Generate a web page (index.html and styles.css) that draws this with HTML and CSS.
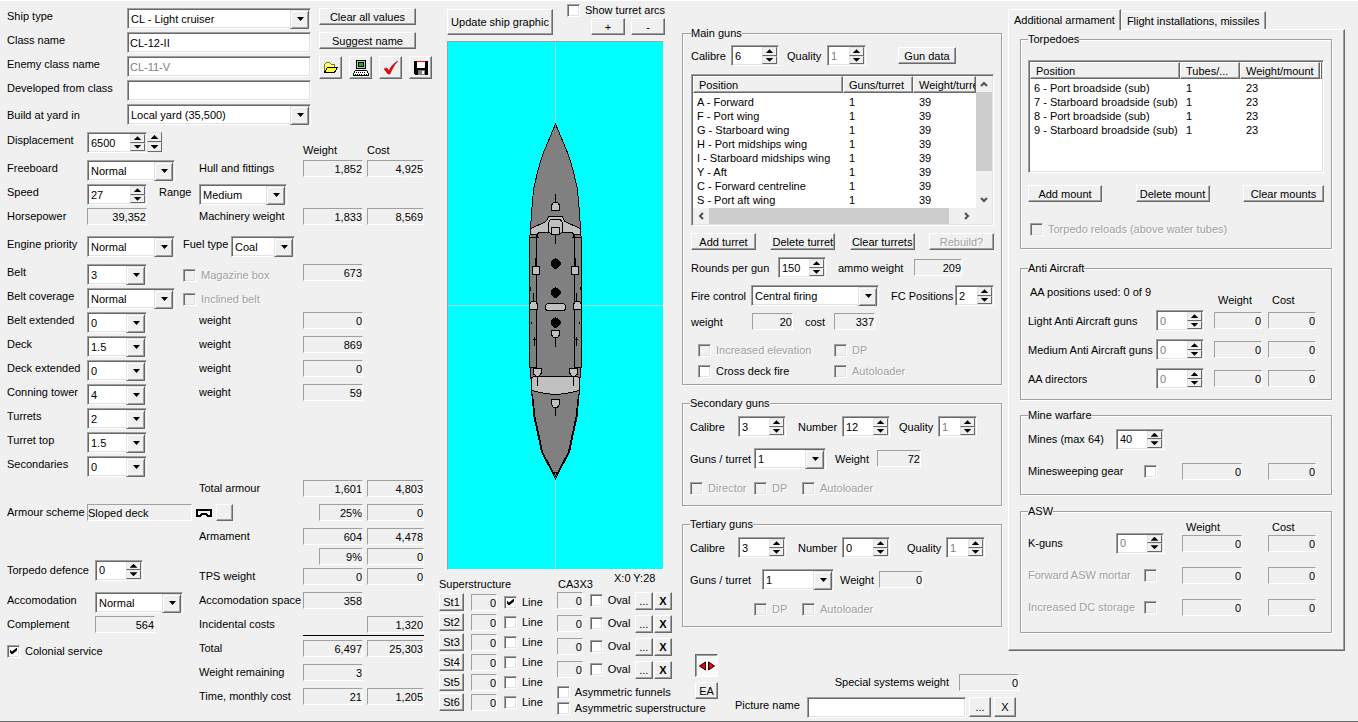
FILE: index.html
```html
<!DOCTYPE html>
<html lang="en">
<head>
    <meta charset="UTF-8">
    <meta name="viewport" content="width=device-width, initial-scale=1.0">
    <title>Ship design</title>
    <link rel="stylesheet" href="styles.css">
</head>
<body>
<form class="designer">

    <!-- hull, machinery, armour -->
    <div class="hull">
        <div class="ident">
            <div>
                <div class="row"><label class="lbl-name" for="shiptype">Ship type</label><span class="combo name"><select id="shiptype"><option>CL - Light cruiser</option></select></span></div>
                <div class="row"><label class="lbl-name" for="classname">Class name</label><input class="text name" id="classname" type="text" value="CL-12-II"></div>
                <div class="row"><label class="lbl-name" for="enemyname">Enemy class name</label><input class="text name" id="enemyname" type="text" value="CL-11-V" disabled></div>
                <div class="row"><label class="lbl-name" for="devfrom">Developed from class</label><input class="text name" id="devfrom" type="text" value=""></div>
                <div class="row"><label class="lbl-name low" for="yard">Build at yard in</label><span class="combo name"><select id="yard"><option>Local yard (35,500)</option></select></span></div>
            </div>
            <div class="actions">
                <button type="button" class="btn">Clear all values</button>
                <button type="button" class="btn">Suggest name</button>
                <div class="icons">
                    <button type="button" class="btn icon" aria-label="Open">
                        <svg width="16" height="16" viewBox="0 0 16 16" shape-rendering="crispEdges"><path d="M1.5 12.500V4.500L3.500 2.500H6.500L8.500 4.500H11.500V7.500" fill="#ffff80" stroke="#808000"/><path d="M1.500 12.500L4.500 7.500H14.500L11.500 12.500Z" fill="#ffff40" stroke="#000"/></svg>
                    </button>
                    <button type="button" class="btn icon" aria-label="Print">
                        <svg width="16" height="18" viewBox="0 0 16 18" shape-rendering="crispEdges"><rect x="3.500" y="1.500" width="9" height="8" fill="#c0c0c0" stroke="#000"/><rect x="5.500" y="3.500" width="5" height="4" fill="#00c000" stroke="#000"/><path d="M2.500 11.500H13.500L15.500 14.500V16.500H.500V14.500Z" fill="#fff" stroke="#000"/><path d="M3 13.500H13M2 15.500H9M11 15.500H14" stroke="#000" stroke-dasharray="1 1"/></svg>
                    </button>
                    <button type="button" class="btn icon" aria-label="Accept">
                        <svg width="16" height="16" viewBox="0 0 16 16"><path d="M1 9L4 8L6 11C8 6 11 3 15 1C11 5 9 9 7 14H5Z" fill="#f00" stroke="#800000" stroke-width=".5"/></svg>
                    </button>
                    <button type="button" class="btn icon" aria-label="Save">
                        <svg width="16" height="16" viewBox="0 0 16 16" shape-rendering="crispEdges"><path d="M1 1H15V15H2L1 14Z"/><path d="M4 2H12V8H4Z" fill="#fff"/><path d="M4 1H12V2H4Z" fill="#f00"/><path d="M5 10H12V15H5Z" fill="#808080"/><path d="M9 11H11V14H9Z" fill="#fff"/></svg>
                    </button>
                </div>
            </div>
        </div>

        <div class="row">
            <label class="lbl" for="disp">Displacement</label>
            <div class="wide">
                <span class="spin w59"><input id="disp" type="text" value="6500"><span class="arrows"><button type="button" aria-label="Up"></button><button type="button" aria-label="Down"></button></span></span>
                <span class="arrows loose"><button type="button" aria-label="Up 100"></button><button type="button" aria-label="Down 100"></button></span>
            </div>
            <div class="sums heads"><span>Weight</span><span>Cost</span></div>
        </div>

        <div class="group">
            <div class="row">
                <label class="lbl" for="freeboard">Freeboard</label>
                <div class="cell"><span class="combo w87"><select id="freeboard"><option>Normal</option></select></span></div>
                <span class="mid">Hull and fittings</span>
                <div class="sums"><output>1,852</output><output>4,925</output></div>
            </div>
            <div class="row">
                <label class="lbl" for="speed">Speed</label>
                <div class="wide">
                    <span class="cell72"><span class="spin w59"><input id="speed" type="text" value="27"><span class="arrows"><button type="button" aria-label="Up"></button><button type="button" aria-label="Down"></button></span></span></span>
                    <label class="lbl-range" for="range">Range</label>
                    <span class="combo w87"><select id="range"><option>Medium</option></select></span>
                </div>
            </div>
            <div class="row">
                <span class="lbl">Horsepower</span>
                <div class="cell"><output class="w59">39,352</output></div>
                <span class="mid">Machinery weight</span>
                <div class="sums"><output>1,833</output><output>8,569</output></div>
            </div>
        </div>

        <div class="row">
            <label class="lbl" for="engine">Engine priority</label>
            <div class="wide">
                <span class="half"><span class="combo w87"><select id="engine"><option>Normal</option></select></span></span>
                <label class="lbl-fuel" for="fuel">Fuel type</label>
                <span class="combo w64"><select id="fuel"><option>Coal</option></select></span>
            </div>
        </div>

        <div class="group">
            <div class="row">
                <label class="lbl" for="belt">Belt</label>
                <div class="wide">
                    <span class="half"><span class="combo w59"><select id="belt"><option>3</option></select></span></span>
                    <label class="check off"><input type="checkbox" disabled>Magazine box</label>
                </div>
                <div class="sums"><output>673</output></div>
            </div>
            <div class="row">
                <label class="lbl" for="coverage">Belt coverage</label>
                <div class="wide">
                    <span class="half"><span class="combo w87"><select id="coverage"><option>Normal</option></select></span></span>
                    <label class="check off"><input type="checkbox" disabled>Inclined belt</label>
                </div>
            </div>
            <div class="row">
                <label class="lbl" for="beltext">Belt extended</label>
                <div class="cell"><span class="combo w59"><select id="beltext"><option>0</option></select></span></div>
                <span class="mid">weight</span>
                <div class="sums"><output>0</output></div>
            </div>
            <div class="row">
                <label class="lbl" for="deck">Deck</label>
                <div class="cell"><span class="combo w59"><select id="deck"><option>1.5</option></select></span></div>
                <span class="mid">weight</span>
                <div class="sums"><output>869</output></div>
            </div>
            <div class="row">
                <label class="lbl" for="deckext">Deck extended</label>
                <div class="cell"><span class="combo w59"><select id="deckext"><option>0</option></select></span></div>
                <span class="mid">weight</span>
                <div class="sums"><output>0</output></div>
            </div>
            <div class="row">
                <label class="lbl" for="conning">Conning tower</label>
                <div class="cell"><span class="combo w59"><select id="conning"><option>4</option></select></span></div>
                <span class="mid">weight</span>
                <div class="sums"><output>59</output></div>
            </div>
            <div class="row">
                <label class="lbl" for="turrets">Turrets</label>
                <span class="combo w59"><select id="turrets"><option>2</option></select></span>
            </div>
            <div class="row">
                <label class="lbl" for="turrettop">Turret top</label>
                <span class="combo w59"><select id="turrettop"><option>1.5</option></select></span>
            </div>
            <div class="row">
                <label class="lbl" for="secondaries">Secondaries</label>
                <span class="combo w59"><select id="secondaries"><option>0</option></select></span>
            </div>
            <div class="row">
                <span class="lbl"></span>
                <div class="cell"></div>
                <span class="mid">Total armour</span>
                <div class="sums"><output>1,601</output><output>4,803</output></div>
            </div>
            <div class="row">
                <span class="lbl">Armour scheme</span>
                <div class="wide scheme">
                    <output class="left">Sloped deck</output>
                    <svg width="16" height="8" viewBox="0 0 16 8" shape-rendering="crispEdges"><path d="M1 1H15V7H12L10 5H6L4 7H1Z" fill="#f0f0f0" stroke="#000" stroke-width="2"/></svg>
                    <button type="button" class="btn small" aria-label="Change armour scheme"></button>
                </div>
                <div class="sums"><output class="pct">25%</output><output>0</output></div>
            </div>
            <div class="row short">
                <span class="lbl"></span>
                <div class="cell"></div>
                <span class="mid">Armament</span>
                <div class="sums"><output>604</output><output>4,478</output></div>
            </div>
            <div class="row pair">
                <label class="lbl88" for="tds">Torpedo defence</label>
                <div class="cell104"><span class="spin"><input id="tds" type="text" value="0"><span class="arrows"><button type="button" aria-label="Up"></button><button type="button" aria-label="Down"></button></span></span></div>
                <span class="mid end">TPS weight</span>
                <div class="sums"><output class="pct">9%</output><output>0</output><output>0</output><output>0</output></div>
            </div>
            <div class="row">
                <label class="lbl88" for="accom">Accomodation</label>
                <div class="cell104"><span class="combo w87"><select id="accom"><option>Normal</option></select></span></div>
                <span class="mid">Accomodation space</span>
                <div class="sums"><output>358</output></div>
            </div>
            <div class="row">
                <span class="lbl88">Complement</span>
                <div class="cell104"><output class="w59">564</output></div>
                <span class="mid">Incidental costs</span>
                <div class="sums ruled"><output class="cost">1,320</output></div>
            </div>
            <div class="row">
                <div class="lbl192"><label class="check"><input type="checkbox" checked>Colonial service</label></div>
                <span class="mid">Total</span>
                <div class="sums"><output>6,497</output><output>25,303</output></div>
            </div>
            <div class="row">
                <div class="lbl192"></div>
                <span class="mid">Weight remaining</span>
                <div class="sums"><output>3</output></div>
            </div>
            <div class="row">
                <div class="lbl192"></div>
                <span class="mid">Time, monthly cost</span>
                <div class="sums"><output>21</output><output>1,205</output></div>
            </div>
        </div>
    </div>

    <!-- ship graphic and superstructure -->
    <div class="graphic">
        <div class="graphic-bar">
            <button type="button" class="btn update">Update ship graphic</button>
            <div class="zoom">
                <label class="check"><input type="checkbox">Show turret arcs</label>
                <div class="zoom-btns">
                    <button type="button" class="btn">+</button>
                    <button type="button" class="btn">-</button>
                </div>
            </div>
        </div>
        <div class="sea">
            <svg viewBox="448 42 215 527" shape-rendering="crispEdges" fill="none" stroke="#000">
                <path d="M555.500 42V569M448 305.500H663" stroke="#a0d8d8"/>
                <path fill="#808080" d="M555.500 124L542.500 155L538 170L534 187L532.500 200L530.500 228L529.500 243V367L530.500 368L531.500 390L534 417L537.500 433L541.500 452L552 472L555.500 479L559 472L569.500 452L573.500 433L577 417L579.500 390L580.500 368L581.500 367V243L580.500 228L578.500 200L577 187L573 170L568.500 155Z"/>
                <path d="M532.500 394L535 417L538.500 433L542.500 452L552 470L555.500 476L559 470L568.500 452L572.500 433L576 417L578.500 394M552 472.500H559"/>
                <!-- side decks -->
                <path d="M536.500 234V367.500H529.500M574.500 234V367.500H581.500M530 234.500H537M574 234.500H581M529 237.500H539M572 237.500H582M537.500 231V238M573.500 231V238"/>
                <!-- forward superstructure -->
                <path fill="#c0c0c0" d="M530.500 228.500L546.500 221.500L548.500 216.500H562.500L564.500 221.500L580.500 228.500V234H574L571 232H562.500L559.500 234.500H551.500L548.500 232H540L537 234H530.500Z"/>
                <path fill="#c0c0c0" d="M548.500 223L550.500 219.500H560.500L562.500 223V231.500L559.500 234.500H551.500L548.500 231.500Z"/>
                <path fill="#c0c0c0" d="M551.500 227.500H559.500V234.500H551.500Z"/>
                <path d="M555.500 235V244"/>
                <!-- aft superstructure -->
                <path fill="#c0c0c0" d="M531.500 378L533.500 376.500H577.500L579.500 378V390.500L571 392.500L558 394.500H553L540 392.500L531.500 390.500Z"/>
                <!-- turrets -->
                <path fill="#c0c0c0" d="M551.500 210.500V205L553.500 202.500H557.500L559.500 205V210.500Z"/>
                <path d="M555.500 194V202"/>
                <path fill="#c0c0c0" d="M532.500 266.500H539.500V274.500H532.500ZM571.500 266.500H578.500V274.500H571.500Z"/>
                <path d="M535.500 258V266M575.500 258V266M533.500 293V302M576.500 293V302"/>
                <path fill="#c0c0c0" d="M529.500 309.500V304L531.500 301.500H535.500L537.500 304V309.500ZM573.500 309.500V304L575.500 301.500H579.500L581.500 304V309.500Z"/>
                <rect fill="#c0c0c0" x="545.500" y="303.500" width="20" height="7" rx="3"/>
                <path fill="#c0c0c0" d="M551.500 330.500H559.500V335L557.500 337.500H553.500L551.500 335Z"/>
                <path fill="#c0c0c0" d="M533.500 368.500H541.500V373L538.500 376.500H536.500L533.500 374ZM569.500 368.500H577.500V374L574.500 376.500H572.500L569.500 373Z"/>
                <path fill="#c0c0c0" d="M551.500 399.500H559.500V404L557.500 407.500H553.500L551.500 404Z"/>
                <path d="M555.500 338V347M537.500 377V386M573.500 377V386M555.500 408V416M534.500 337V346M576.500 337V346M533 339.500H536M575 339.500H578M530 288V291M531.500 322V324M579.500 322V324M530.500 287V290M580.500 287V290"/>
                <!-- funnels -->
                <path fill="#000" d="M555.500 258.500L560 262V265L557 268H554L551 265V262ZM555.500 287.500L560 291V294L557 297H554L551 294V291ZM555.500 317.500L560 321V324L557 327H554L551 324V321Z"/>
            </svg>
        </div>
        <div class="captions">
            <span class="cap-left">Superstructure</span>
            <span class="cap-mid">CA3X3</span>
            <span class="coords">X:0 Y:28</span>
        </div>
        <div class="structures">
            <div class="st-list">
                <div class="st"><button type="button" class="btn">St1</button><output>0</output><label class="check"><input type="checkbox" checked>Line</label></div>
                <div class="st"><button type="button" class="btn">St2</button><output>0</output><label class="check"><input type="checkbox">Line</label></div>
                <div class="st"><button type="button" class="btn">St3</button><output>0</output><label class="check"><input type="checkbox">Line</label></div>
                <div class="st"><button type="button" class="btn">St4</button><output>0</output><label class="check"><input type="checkbox">Line</label></div>
                <div class="st"><button type="button" class="btn">St5</button><output>0</output><label class="check"><input type="checkbox">Line</label></div>
                <div class="st"><button type="button" class="btn">St6</button><output>0</output><label class="check"><input type="checkbox">Line</label></div>
            </div>
            <div class="funnel-list">
                <div class="funnel"><output>0</output><label class="check"><input type="checkbox">Oval</label><button type="button" class="btn">...</button><button type="button" class="btn x">X</button></div>
                <div class="funnel"><output>0</output><label class="check"><input type="checkbox">Oval</label><button type="button" class="btn">...</button><button type="button" class="btn x">X</button></div>
                <div class="funnel"><output>0</output><label class="check"><input type="checkbox">Oval</label><button type="button" class="btn">...</button><button type="button" class="btn x">X</button></div>
                <div class="funnel"><output>0</output><label class="check"><input type="checkbox">Oval</label><button type="button" class="btn">...</button><button type="button" class="btn x">X</button></div>
                <label class="check"><input type="checkbox">Asymmetric funnels</label>
                <label class="check"><input type="checkbox">Asymmetric superstructure</label>
            </div>
        </div>
    </div>

    <!-- weapons -->
    <div class="weapons">
        <div class="weapons-cols">
            <div class="guns">
                <fieldset class="main-guns">
                    <legend>Main guns</legend>
                    <div class="line main-calibre">
                        <label for="mcal">Calibre</label>
                        <span class="spin"><input id="mcal" type="text" value="6"><span class="arrows"><button type="button" aria-label="Up"></button><button type="button" aria-label="Down"></button></span></span>
                        <label for="mqual">Quality</label>
                        <span class="spin w39"><input id="mqual" type="text" value="1" disabled><span class="arrows"><button type="button" aria-label="Up"></button><button type="button" aria-label="Down"></button></span></span>
                        <button type="button" class="btn">Gun data</button>
                    </div>
                    <div class="list turret-list">
                        <table>
                            <thead><tr><th class="c-pos">Position</th><th class="c-guns">Guns/turret</th><th>Weight/turret</th></tr></thead>
                            <tbody>
                                <tr><td>A - Forward</td><td>1</td><td>39</td></tr>
                                <tr><td>F - Port wing</td><td>1</td><td>39</td></tr>
                                <tr><td>G - Starboard wing</td><td>1</td><td>39</td></tr>
                                <tr><td>H - Port midships wing</td><td>1</td><td>39</td></tr>
                                <tr><td>I - Starboard midships wing</td><td>1</td><td>39</td></tr>
                                <tr><td>Y - Aft</td><td>1</td><td>39</td></tr>
                                <tr><td>C - Forward centreline</td><td>1</td><td>39</td></tr>
                                <tr><td>S - Port aft wing</td><td>1</td><td>39</td></tr>
                            </tbody>
                        </table>
                        <div class="vscroll">
                            <svg width="16" height="16" viewBox="0 0 16 16"><path d="M5 10L8 7L11 10"/></svg>
                            <span class="thumb"></span>
                            <svg width="16" height="16" viewBox="0 0 16 16"><path d="M5 6L8 9L11 6"/></svg>
                        </div>
                        <div class="hscroll">
                            <svg width="16" height="16" viewBox="0 0 16 16"><path d="M10 5L7 8L10 11"/></svg>
                            <span class="thumb"></span>
                            <svg width="16" height="16" viewBox="0 0 16 16"><path d="M6 5L9 8L6 11"/></svg>
                        </div>
                    </div>
                    <div class="turret-btns">
                        <button type="button" class="btn">Add turret</button>
                        <button type="button" class="btn">Delete turret</button>
                        <button type="button" class="btn">Clear turrets</button>
                        <button type="button" class="btn" disabled>Rebuild?</button>
                    </div>
                    <div class="line rounds">
                        <label for="rounds">Rounds per gun</label>
                        <span class="spin"><input id="rounds" type="text" value="150"><span class="arrows"><button type="button" aria-label="Up"></button><button type="button" aria-label="Down"></button></span></span>
                        <span>ammo weight</span>
                        <output class="w48">209</output>
                    </div>
                    <div class="line fire">
                        <label for="fire">Fire control</label>
                        <span class="combo w128"><select id="fire"><option>Central firing</option></select></span>
                        <label for="fcpos">FC Positions</label>
                        <span class="spin w39"><input id="fcpos" type="text" value="2"><span class="arrows"><button type="button" aria-label="Up"></button><button type="button" aria-label="Down"></button></span></span>
                    </div>
                    <div class="line fire-cost">
                        <span>weight</span>
                        <output class="w41">20</output>
                        <span>cost</span>
                        <output class="w41">337</output>
                    </div>
                    <div class="main-checks">
                        <label class="check off"><input type="checkbox" disabled>Increased elevation</label>
                        <label class="check off"><input type="checkbox" disabled>DP</label>
                        <label class="check"><input type="checkbox">Cross deck fire</label>
                        <label class="check off"><input type="checkbox" disabled>Autoloader</label>
                    </div>
                </fieldset>

                <fieldset class="light-guns">
                    <legend>Secondary guns</legend>
                    <div class="line sec-calibre">
                        <label for="scal">Calibre</label>
                        <span class="spin"><input id="scal" type="text" value="3"><span class="arrows"><button type="button" aria-label="Up"></button><button type="button" aria-label="Down"></button></span></span>
                        <label for="snum">Number</label>
                        <span class="spin"><input id="snum" type="text" value="12"><span class="arrows"><button type="button" aria-label="Up"></button><button type="button" aria-label="Down"></button></span></span>
                        <label for="squal">Quality</label>
                        <span class="spin w39"><input id="squal" type="text" value="1" disabled><span class="arrows"><button type="button" aria-label="Up"></button><button type="button" aria-label="Down"></button></span></span>
                    </div>
                    <div class="line sec-turret">
                        <label for="sgpt">Guns / turret</label>
                        <span class="combo w72"><select id="sgpt"><option>1</option></select></span>
                        <span>Weight</span>
                        <output class="w44">72</output>
                    </div>
                    <div class="light-checks">
                        <label class="check off"><input type="checkbox" disabled>Director</label>
                        <label class="check off dp"><input type="checkbox" disabled>DP</label>
                        <label class="check off"><input type="checkbox" disabled>Autoloader</label>
                    </div>
                </fieldset>

                <fieldset class="light-guns">
                    <legend>Tertiary guns</legend>
                    <div class="line ter-calibre">
                        <label for="tcal">Calibre</label>
                        <span class="spin"><input id="tcal" type="text" value="3"><span class="arrows"><button type="button" aria-label="Up"></button><button type="button" aria-label="Down"></button></span></span>
                        <label for="tnum">Number</label>
                        <span class="spin"><input id="tnum" type="text" value="0"><span class="arrows"><button type="button" aria-label="Up"></button><button type="button" aria-label="Down"></button></span></span>
                        <label for="tqual">Quality</label>
                        <span class="spin w39"><input id="tqual" type="text" value="1" disabled><span class="arrows"><button type="button" aria-label="Up"></button><button type="button" aria-label="Down"></button></span></span>
                    </div>
                    <div class="line ter-turret">
                        <label for="tgpt">Guns / turret</label>
                        <span class="combo w72"><select id="tgpt"><option>1</option></select></span>
                        <span>Weight</span>
                        <output class="w44">0</output>
                    </div>
                    <div class="light-checks">
                        <label class="check off dp"><input type="checkbox" disabled>DP</label>
                        <label class="check off"><input type="checkbox" disabled>Autoloader</label>
                    </div>
                </fieldset>
            </div>

            <div class="extra">
                <div class="tabs" role="tablist">
                    <button type="button" role="tab" class="tab active" aria-selected="true">Additional armament</button>
                    <button type="button" role="tab" class="tab">Flight installations, missiles</button>
                </div>
                <div class="panel">
                    <fieldset class="torpedoes">
                        <legend>Torpedoes</legend>
                        <div class="list mount-list">
                            <table>
                                <thead><tr><th class="c-pos">Position</th><th class="c-tubes">Tubes/...</th><th class="c-mount">Weight/mount</th><th></th></tr></thead>
                                <tbody>
                                    <tr><td>6 - Port broadside (sub)</td><td>1</td><td>23</td><td></td></tr>
                                    <tr><td>7 - Starboard broadside (sub)</td><td>1</td><td>23</td><td></td></tr>
                                    <tr><td>8 - Port broadside (sub)</td><td>1</td><td>23</td><td></td></tr>
                                    <tr><td>9 - Starboard broadside (sub)</td><td>1</td><td>23</td><td></td></tr>
                                </tbody>
                            </table>
                        </div>
                        <div class="mount-btns">
                            <button type="button" class="btn">Add mount</button>
                            <button type="button" class="btn">Delete mount</button>
                            <button type="button" class="btn">Clear mounts</button>
                        </div>
                        <label class="check off"><input type="checkbox" disabled>Torpedo reloads (above water tubes)</label>
                    </fieldset>

                    <fieldset class="aa">
                        <legend>Anti Aircraft</legend>
                        <div class="aa-head"><span class="used">AA positions used: 0 of 9</span><span class="head">Weight</span><span class="head">Cost</span></div>
                        <div class="aa-row">
                            <label for="laa">Light Anti Aircraft guns</label>
                            <span class="spin"><input id="laa" type="text" value="0" disabled><span class="arrows"><button type="button" aria-label="Up"></button><button type="button" aria-label="Down"></button></span></span>
                            <output class="w48">0</output><output class="w48">0</output>
                        </div>
                        <div class="aa-row">
                            <label for="maa">Medium Anti Aircraft guns</label>
                            <span class="spin"><input id="maa" type="text" value="0" disabled><span class="arrows"><button type="button" aria-label="Up"></button><button type="button" aria-label="Down"></button></span></span>
                            <output class="w48">0</output><output class="w48">0</output>
                        </div>
                        <div class="aa-row">
                            <label for="aadir">AA directors</label>
                            <span class="spin"><input id="aadir" type="text" value="0" disabled><span class="arrows"><button type="button" aria-label="Up"></button><button type="button" aria-label="Down"></button></span></span>
                            <output class="w48">0</output><output class="w48">0</output>
                        </div>
                    </fieldset>

                    <fieldset class="mines">
                        <legend>Mine warfare</legend>
                        <div class="asw-row">
                            <label for="mines">Mines (max 64)</label>
                            <span class="spin"><input id="mines" type="text" value="40"><span class="arrows"><button type="button" aria-label="Up"></button><button type="button" aria-label="Down"></button></span></span>
                        </div>
                        <div class="asw-row">
                            <label for="sweep">Minesweeping gear</label>
                            <input id="sweep" type="checkbox">
                            <output class="w59">0</output><output class="w48">0</output>
                        </div>
                    </fieldset>

                    <fieldset class="asw">
                        <legend>ASW</legend>
                        <div class="asw-row asw-heads"><span></span><span></span><span class="head">Weight</span><span class="head">Cost</span></div>
                        <div class="asw-row">
                            <label for="kguns">K-guns</label>
                            <span class="spin"><input id="kguns" type="text" value="0" disabled><span class="arrows"><button type="button" aria-label="Up"></button><button type="button" aria-label="Down"></button></span></span>
                            <output class="w59">0</output><output class="w48">0</output>
                        </div>
                        <div class="asw-row">
                            <label class="off" for="mortar">Forward ASW mortar</label>
                            <input id="mortar" type="checkbox" disabled>
                            <output class="w59">0</output><output class="w48">0</output>
                        </div>
                        <div class="asw-row">
                            <label class="off" for="dcs">Increased DC storage</label>
                            <input id="dcs" type="checkbox" disabled>
                            <output class="w59">0</output><output class="w48">0</output>
                        </div>
                    </fieldset>
                </div>
            </div>
        </div>

        <div class="footer">
            <div class="tools">
                <button type="button" class="btn toggle" aria-label="Flip view" aria-pressed="true">
                    <svg width="16" height="10" viewBox="0 0 16 10"><path d="M.5 5L6.500 1V9ZM15.500 5L9.500 1V9Z" fill="#f00" stroke="#000"/></svg>
                </button>
                <button type="button" class="btn">EA</button>
            </div>
            <div class="picture">
                <div class="special"><span>Special systems weight</span><output>0</output></div>
                <div class="picture-row">
                    <label for="picture">Picture name</label>
                    <input class="text" id="picture" type="text" value="">
                    <button type="button" class="btn">...</button>
                    <button type="button" class="btn">X</button>
                </div>
            </div>
        </div>
    </div>
</form>
</body>
</html>
```
FILE: styles.css
```css
* {
    box-sizing: border-box;
}
body {
    margin: 0;
    background: #f0f0f0;
    color: #000;
}
body, button, input, select {
    font-family: "Liberation Sans", Arial, sans-serif;
    font-size: 11px;
    line-height: 16px;
}
.designer {
    display: grid;
    grid-template-columns: 432px 243px 1fr;
    min-height: 100vh;
    padding-left: 7px;
    box-shadow: inset 0 1px 0 #fff;
    border-bottom: 1px solid #696969;
    white-space: nowrap;
}

/* controls */
.btn {
    height: 17px;
    padding: 0;
    background: #f0f0f0;
    color: #000;
    border: 1px solid;
    border-color: #fff #696969 #696969 #fff;
    box-shadow: inset -1px -1px 0 #a0a0a0;
    line-height: 14px;
    display: flex;
    align-items: center;
    justify-content: center;
}
.btn:disabled,
.off {
    color: #a0a0a0;
    text-shadow: 1px 1px 0 #fff;
}
.text, .combo, .spin {
    height: 21px;
    background: #fff;
    border: 1px solid;
    border-color: #a0a0a0 #fff #fff #a0a0a0;
    box-shadow: inset 1px 1px 0 #696969, inset -1px -1px 0 #e3e3e3;
    border-radius: 0;
}
.text {
    padding: 0 2px;
    color: #000;
}
input:disabled {
    color: #808080;
}
.combo {
    display: block;
    position: relative;
    padding: 1px;
}
.combo select {
    display: block;
    width: 100%;
    height: 17px;
    padding: 0 0 0 2px;
    border: 0;
    background: transparent;
    color: #000;
    appearance: none;
}
.combo::before {
    content: "";
    position: absolute;
    top: 1px;
    right: 1px;
    width: 17px;
    height: 17px;
    background: #f0f0f0;
    border: 1px solid;
    border-color: #e3e3e3 #696969 #696969 #e3e3e3;
    box-shadow: inset 1px 1px 0 #fff, inset -1px -1px 0 #a0a0a0;
    pointer-events: none;
}
.combo::after {
    content: "";
    position: absolute;
    top: 8px;
    right: 6px;
    width: 7px;
    height: 4px;
    background: #000;
    clip-path: polygon(0 0, 100% 0, 50% 100%);
    pointer-events: none;
}
.spin {
    display: flex;
    width: 48px;
    padding: 1px;
}
.spin input {
    flex: 1;
    min-width: 0;
    padding: 0 0 0 2px;
    border: 0;
    background: transparent;
    color: #000;
}
.spin input:disabled {
    color: #808080;
}
.arrows {
    display: flex;
    flex-direction: column;
    width: 15px;
    flex: none;
}
.arrows button {
    flex: 1;
    min-height: 0;
    padding: 0;
    background: #f0f0f0;
    border: 1px solid;
    border-color: #e3e3e3 #696969 #696969 #e3e3e3;
    display: flex;
    align-items: center;
    justify-content: center;
}
.arrows button::before {
    content: "";
    width: 8px;
    height: 4px;
    background: #000;
    clip-path: polygon(50% 0, 100% 100%, 0 100%);
}
.arrows button:last-child::before {
    clip-path: polygon(0 0, 100% 0, 50% 100%);
}
.arrows.loose {
    height: 20px;
}
output {
    display: block;
    height: 17px;
    line-height: 16px;
    text-align: right;
    border: 1px solid;
    border-color: #a0a0a0 #fff #fff #a0a0a0;
}
input[type="checkbox"] {
    appearance: none;
    flex: none;
    width: 13px;
    height: 13px;
    margin: 0;
    background: #fff;
    border: 1px solid;
    border-color: #a0a0a0 #fff #fff #a0a0a0;
    box-shadow: inset 1px 1px 0 #696969, inset -1px -1px 0 #e3e3e3;
}
input[type="checkbox"]:disabled {
    background: #f0f0f0;
}
input[type="checkbox"]:checked::before {
    content: "";
    display: block;
    width: 7px;
    height: 7px;
    margin: 2px;
    background: #000;
    clip-path: polygon(0 28%, 28% 57%, 100% 0, 100% 43%, 28% 100%, 0 71%);
}
.check {
    display: flex;
    align-items: center;
    gap: 5px;
}
.w39 { width: 39px; }
.w41 { width: 41px; }
.w44 { width: 44px; }
.w48 { width: 48px; }
.w59 { width: 60px; }
.w64 { width: 64px; }
.w72 { width: 72px; }
.w87 { width: 88px; }
.w128 { width: 128px; }

/* hull column */
.hull {
    display: flex;
    flex-direction: column;
    gap: 4px;
    padding-top: 8px;
}
.ident {
    display: flex;
    gap: 8px;
}
.row {
    display: flex;
    align-items: flex-start;
    height: 24px;
}
.row.short {
    height: 20px;
}
.row.pair {
    height: 44px;
    align-items: center;
}
.lbl-name { width: 120px; }
.lbl-name.low { padding-top: 3px; }
.name { width: 184px; }
.lbl { width: 80px; }
.lbl88 { width: 88px; }
.lbl192 { width: 192px; }
.cell { width: 112px; }
.cell72 { width: 72px; }
.cell104 { width: 104px; }
.mid { width: 104px; }
.mid.end { align-self: flex-end; padding-bottom: 8px; }
.half { width: 96px; }
.lbl-range { width: 40px; }
.lbl-fuel { width: 48px; }
.wide {
    display: flex;
    width: 216px;
}
.row .check {
    height: 22px;
}
.sums {
    display: grid;
    grid-template-columns: 60px 57px;
    align-content: start;
    column-gap: 4px;
}
.pair .sums {
    align-self: stretch;
    row-gap: 3px;
}
.sums .pct {
    width: 44px;
    justify-self: end;
}
.sums .cost {
    grid-column: 2;
}
.ruled {
    height: 20px;
    border-bottom: 1px solid #000;
}
.heads {
    align-self: flex-end;
    line-height: 12px;
}
.actions {
    display: flex;
    flex-direction: column;
    align-items: flex-start;
    gap: 7px;
}
.actions > .btn {
    width: 97px;
}
.icons {
    display: flex;
    gap: 7px;
}
.icon {
    width: 23px;
    height: 23px;
}
.scheme {
    align-items: center;
    gap: 4px;
}
.scheme .left {
    width: 105px;
    text-align: left;
}
.small {
    width: 17px;
}

/* ship graphic */
.graphic {
    display: flex;
    flex-direction: column;
}
.graphic-bar {
    display: flex;
    justify-content: space-between;
    padding: 2px 17px 0 8px;
}
.update {
    width: 106px;
    height: 26px;
    margin-top: 7px;
}
.zoom {
    width: 98px;
}
.zoom-btns {
    display: flex;
    justify-content: flex-end;
    gap: 6px;
}
.zoom-btns .btn {
    width: 34px;
    height: 17px;
}
.sea {
    margin: 6px 18px 0 8px;
    background: #0ff;
    border: 1px solid;
    border-color: #a0a0a0 #fff #fff #a0a0a0;
}
.sea svg {
    display: block;
    width: 100%;
}
.captions {
    display: flex;
    height: 22px;
}
.captions span {
    align-self: flex-end;
}
.captions .coords {
    align-self: flex-start;
}
.cap-left { width: 119px; }
.cap-mid { width: 56px; }
.structures {
    display: flex;
    gap: 14px;
}
.st-list {
    width: 106px;
}
.st {
    display: flex;
    align-items: center;
    gap: 7px;
    height: 20px;
}
.st .btn {
    width: 25px;
    height: 18px;
}
.st output, .funnel output {
    width: 26px;
}
.funnel {
    display: flex;
    gap: 7px;
    height: 23px;
    align-items: flex-start;
}
.funnel .btn {
    width: 18px;
    height: 18px;
}
.funnel .btn.x {
    margin-left: -6px;
    font-weight: bold;
}
.funnel .check {
    width: 38px;
}

/* weapons */
.weapons-cols {
    display: grid;
    grid-template-columns: 320fr 337fr;
    gap: 6px;
    padding-right: 13px;
}
.guns {
    display: flex;
    flex-direction: column;
    gap: 10px;
    padding-top: 25px;
}
fieldset {
    margin: 0;
    min-width: 0;
    padding: 0 7px;
    border: 1px solid #a0a0a0;
    box-shadow: 1px 1px 0 #fff, inset 1px 1px 0 #fff;
}
legend {
    padding: 0;
    background: #f0f0f0;
}
.line {
    display: grid;
    align-items: center;
    min-height: 16px;
}
.main-guns {
    display: flex;
    flex-direction: column;
    gap: 7px;
    padding: 4px 7px 5px 8px;
}
.main-calibre { grid-template-columns: 40px 56px 40px 71px 58px; }
.rounds { grid-template-columns: 87px 60px 76px auto; }
.fire { grid-template-columns: 60px 140px 64px auto; }
.fire-cost { grid-template-columns: 61px 53px 29px auto; }
.main-checks {
    display: grid;
    grid-template-columns: 136px auto;
    row-gap: 5px;
    padding: 5px 0 0 7px;
}
.light-guns {
    padding: 5px 7px 9px;
    display: flex;
    flex-direction: column;
    gap: 11px;
}
.sec-calibre { grid-template-columns: 48px 60px 44px 57px 39px auto; }
.ter-calibre { grid-template-columns: 48px 60px 44px 65px 39px auto; }
.sec-turret { grid-template-columns: 64px 81px 42px auto; }
.ter-turret { grid-template-columns: 72px 78px 39px auto; }
.light-checks {
    display: grid;
    grid-template-columns: 64px 48px auto;
}
.light-checks .dp {
    grid-column: 2;
}

.list {
    background: #fff;
    border: 1px solid;
    border-color: #a0a0a0 #fff #fff #a0a0a0;
    box-shadow: inset 1px 1px 0 #696969, inset -1px -1px 0 #e3e3e3;
    padding: 1px;
}
table {
    width: 100%;
    table-layout: fixed;
    border-collapse: separate;
    border-spacing: 0;
    align-self: start;
}
th {
    height: 17px;
    padding: 0 0 0 5px;
    background: #f0f0f0;
    border: 1px solid;
    border-color: #fff #696969 #696969 #fff;
    box-shadow: inset -1px -1px 0 #a0a0a0;
    font-weight: normal;
    text-align: left;
    line-height: 14px;
    overflow: hidden;
}
td {
    height: 14px;
    padding: 0 0 0 6px;
    line-height: 14px;
}
td:first-child {
    padding-left: 4px;
}
tbody::before {
    content: "";
    display: block;
    height: 2px;
}
.c-pos { width: 150px; }
.c-guns { width: 70px; }
.c-tubes { width: 60px; }
.c-mount { width: 80px; }
.turret-list {
    display: grid;
    grid-template-columns: 1fr 16px;
    grid-template-rows: 132px 16px;
    margin-top: 1px;
    overflow: hidden;
}
.vscroll, .hscroll {
    display: flex;
    background: #f0f0f0;
}
.vscroll {
    flex-direction: column;
}
.hscroll {
    grid-column: 1 / 3;
    padding-right: 17px;
}
.vscroll svg, .hscroll svg {
    fill: none;
    stroke: #505050;
    stroke-width: 2;
}
.vscroll svg:last-child { margin-top: auto; }
.hscroll svg:last-child { margin-left: auto; }
.thumb { background: #cdcdcd; }
.vscroll .thumb { height: 60%; }
.hscroll .thumb { width: 85%; }
.turret-btns, .mount-btns {
    display: flex;
    justify-content: space-between;
}
.turret-btns .btn {
    width: 65px;
}

/* additional armament */
.extra {
    padding-top: 9px;
}
.tabs {
    display: flex;
    align-items: flex-end;
}
.tab {
    height: 18px;
    padding: 0 5px;
    background: #f0f0f0;
    border: 1px solid;
    border-color: #fff #696969 transparent #fff;
    border-bottom: 0;
    box-shadow: inset -1px 0 0 #a0a0a0;
    white-space: nowrap;
}
.tab.active {
    position: relative;
    height: 21px;
    margin-bottom: -1px;
}
.panel {
    padding: 1px 12px 17px 11px;
    border: 1px solid;
    border-color: #fff #696969 #696969 #fff;
    box-shadow: inset -1px -1px 0 #a0a0a0;
}
.torpedoes {
    padding: 13px 7px 11px;
    display: flex;
    flex-direction: column;
    gap: 12px;
}
.mount-list {
    height: 113px;
}
.mount-btns .btn {
    width: 74px;
}
.mount-btns .btn:last-child {
    width: 81px;
}
.torpedoes .check {
    padding: 7px 0 0 2px;
}
.aa {
    margin-top: 11px;
    padding: 7px 7px 6px;
}
.aa-head, .aa-row {
    display: grid;
    grid-template-columns: 128px 58px 54px auto;
    align-items: center;
    height: 29px;
}
.aa-head {
    align-items: end;
    height: 23px;
    line-height: 12px;
}
.aa-head .used {
    grid-column: 1 / 3;
    align-self: start;
    padding: 3px 0 0 2px;
}
.head {
    padding-left: 4px;
}
.mines {
    margin-top: 7px;
    padding: 0 7px 7px;
}
.asw-row {
    display: grid;
    grid-template-columns: 88px 66px 86px auto;
    align-items: center;
    height: 32px;
}
.asw-row input[type="checkbox"] {
    margin-left: 28px;
}
.asw {
    margin-top: 8px;
    padding: 0 7px 9px;
}
.asw-heads {
    align-items: start;
    height: 8px;
}

/* bottom strip */
.footer {
    display: flex;
    gap: 17px;
    padding: 3px 0 3px 13px;
}
.tools {
    display: flex;
    flex-direction: column;
    gap: 5px;
}
.tools .btn {
    width: 23px;
}
.tools .toggle {
    height: 23px;
    background: #f8f8f8;
    border-color: #696969 #fff #fff #696969;
    box-shadow: inset 1px 1px 0 #a0a0a0;
}
.picture {
    display: flex;
    flex-direction: column;
    padding-top: 20px;
    gap: 6px;
    width: 284px;
}
.special {
    display: flex;
    justify-content: flex-end;
    gap: 10px;
}
.special output {
    width: 60px;
}
.picture-row {
    display: flex;
    gap: 3px;
    padding-right: 3px;
}
.picture-row label {
    width: 69px;
}
.picture-row .text {
    flex: 1;
    min-width: 0;
}
.picture-row .btn {
    width: 22px;
    height: 20px;
}
```
